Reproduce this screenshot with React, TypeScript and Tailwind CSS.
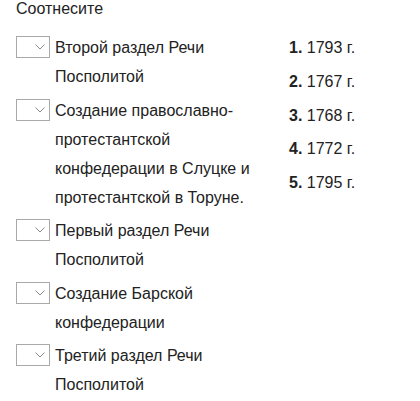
const items = [
  "Второй раздел Речи Посполитой",
  "Создание православно-протестантской конфедерации в Слуцке и протестантской в Торуне.",
  "Первый раздел Речи Посполитой",
  "Создание Барской конфедерации",
  "Третий раздел Речи Посполитой",
];

const answers = ["1793 г.", "1767 г.", "1768 г.", "1772 г.", "1795 г."];

function Select() {
  return (
    <div className="mt-[3px] flex h-[22px] w-[34px] shrink-0 items-center justify-end border border-[#a9a9a9] bg-white pr-[4px]">
      <svg width="10" height="6" viewBox="0 0 10 6" fill="none">
        <path d="M0.5 0.5 L5 5 L9.5 0.5" stroke="#8a8a8a" strokeWidth="1" />
      </svg>
    </div>
  );
}

export default function App() {
  return (
    <div className="min-h-[401px] bg-white px-4 font-['Liberation_Sans',Arial,sans-serif] text-[16px] text-[#222]">
      <p className="leading-[18px]">Соотнесите</p>
      <div className="mt-[15px] flex">
        <div className="flex w-[273px] flex-col gap-[4.5px]">
          {items.map((text) => (
            <div key={text} className="flex gap-[5px]">
              <Select />
              <p className="w-[215px] leading-[29px]">{text}</p>
            </div>
          ))}
        </div>
        <div className="flex flex-col gap-[4.75px]">
          {answers.map((a, i) => (
            <p key={a} className="leading-[29px]">
              <span className="font-bold">{i + 1}.</span> {a}
            </p>
          ))}
        </div>
      </div>
    </div>
  );
}
